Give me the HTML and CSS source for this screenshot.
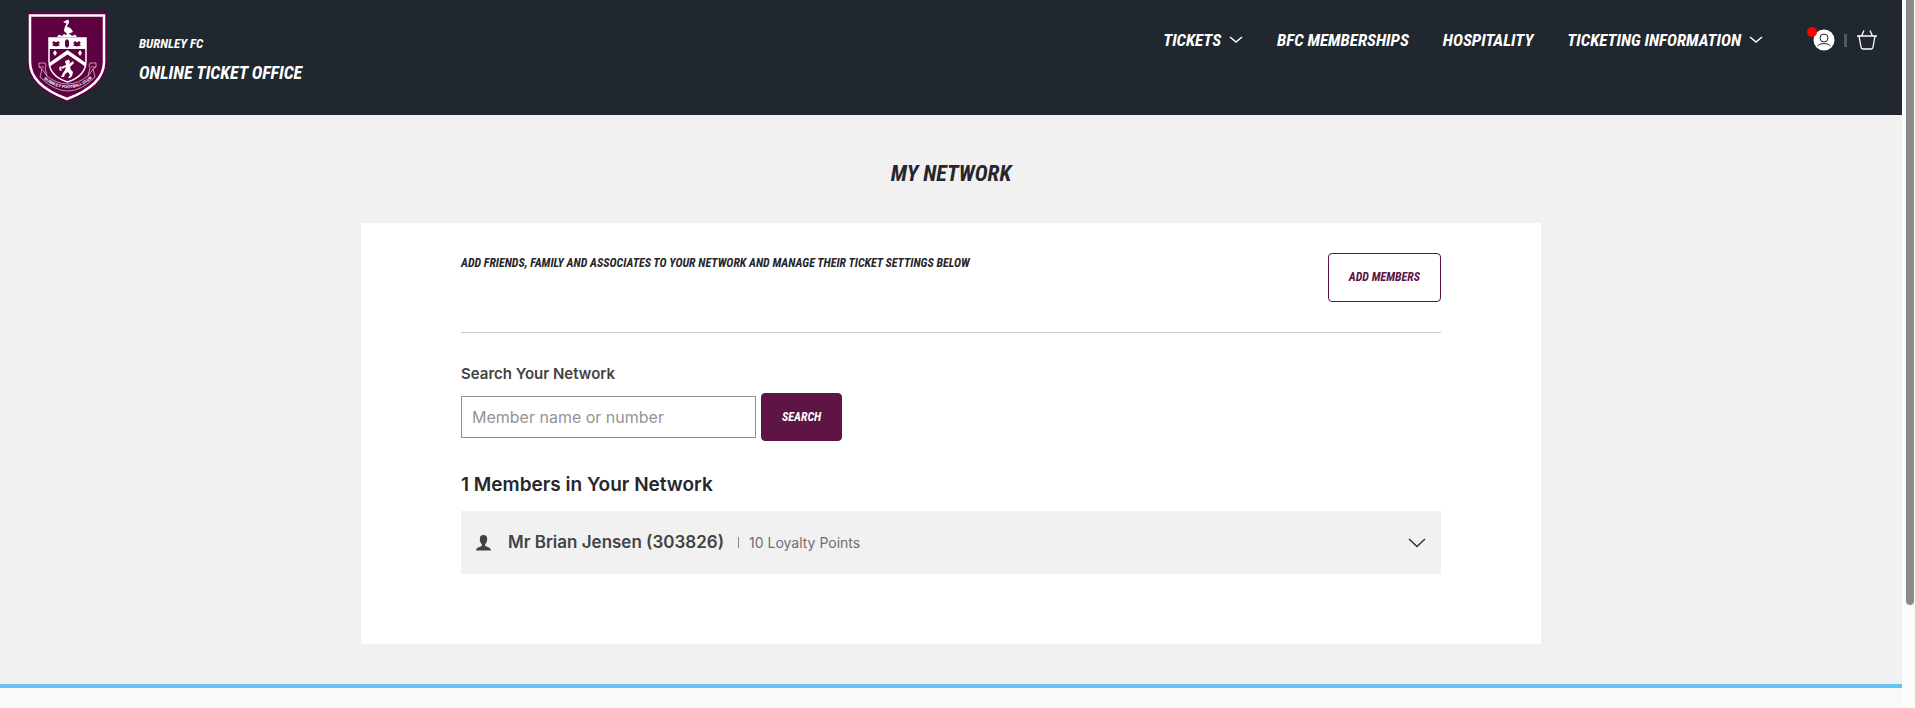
FILE: index.html
```html
<!DOCTYPE html>
<html lang="en">
<head>
    <meta charset="UTF-8">
    <meta name="viewport" content="width=device-width, initial-scale=1.0">
    <title>My Network - Burnley FC</title>
    <link rel="stylesheet" href="styles.css">
</head>
<body>
    <div class="page">
        <header class="header">
            <a href="#" class="brand">
                <svg class="crest" viewBox="0 0 80 90" role="img" aria-label="Burnley FC crest">
                    <path d="M0 0H80V50C80 70 62 82 40 90C18 82 0 70 0 50Z" fill="#5f0040"/>
                    <path d="M3 3.500H77V50C77 68 60 79.500 40 87C20 79.500 3 68 3 50Z" fill="none" stroke="#fff" stroke-width="2.500"/>
                    <!-- stork -->
                    <path d="M36 10L39 8.500Q41 7 42 9Q42.500 11 40.500 13L40 15Q44 15 46 20L42 21.500L41.500 24H39.500V21Q36 20 37.500 16L39.500 11.500Z" fill="#fff"/>
                    <path d="M30 25L32 22.500L35 24L37 22L40 23.500L43 22L45 24L48 22.500L50 25Z" fill="#fff"/>
                    <!-- shield -->
                    <path d="M22 26H59V49Q59 64 40.500 70Q22 64 22 49Z" fill="#5f0040" stroke="#fff" stroke-width="1.500"/>
                    <path d="M22 26H59V37H22Z" fill="#fff"/>
                    <path d="M25 31L27 29L29 30.500L31 29L33 31L31.500 32L33 33.500L29 34.500L25 33.500L26.500 32Z M46 31L48 29L50 30.500L52 29L54 31L52.500 32L54 33.500L50 34.500L46 33.500L47.500 32Z M40 27L42 29V34L40 36L38 34V29Z" fill="#5f0040"/>
                    <path d="M22 51L40.500 38L59 51V55L40.500 42.500L22 55Z" fill="#fff"/>
                    <path d="M28 38L30 41L28 44L26 41Z M53 38L55 41L53 44L51 41Z" fill="#fff"/>
                    <!-- lion -->
                    <path d="M38 49L42 47.500L43 50L42 52L46 49L47 51L43 55L44 58L46 60L45 64L43 66H41L43 63L41 60L38 62L37 65H34L36 61L38 58L39 55L35 57L34 55L39 53ZM34 59Q31 58 33 54L34 55Q33 57 35 58Z" fill="#fff"/>
                    <!-- scroll -->
                    <path d="M12 51H18Q20 53 18 56L20 64Q40 80 61 64L63 56Q61 53 63 51H69V55L66 57L68 65Q41 93 13 65L15 57L12 55ZM12 55H17M64 55H69M15 57L20 64M66 57L61 64" fill="#5f0040" stroke="#d6bfcd" stroke-width="0.800"/>
                    <path id="motto" d="M14 65Q41 88 68 64" fill="none"/>
                    <text class="crest-text"><textPath href="#motto" startOffset="50%" text-anchor="middle">BURNLEY FOOTBALL CLUB</textPath></text>
                </svg>
                <span class="brand-text">
                    <span class="brand-club">Burnley FC</span>
                    <span class="brand-title">Online Ticket Office</span>
                </span>
            </a>
            <nav class="nav">
                <a href="#" class="nav-link">Tickets
                    <svg class="nav-arrow" viewBox="0 0 14 8"><path d="M1 1L7 6L13 1"/></svg>
                </a>
                <a href="#" class="nav-link">BFC Memberships</a>
                <a href="#" class="nav-link">Hospitality</a>
                <a href="#" class="nav-link">Ticketing Information
                    <svg class="nav-arrow" viewBox="0 0 14 8"><path d="M1 1L7 6L13 1"/></svg>
                </a>
                <div class="tools">
                    <a href="#" class="account" aria-label="My account">
                        <svg width="22" height="22" viewBox="0 0 22 22"><circle cx="11" cy="11" r="10.500" fill="#fff"/><g fill="none" stroke="#20272e" stroke-width="1"><circle cx="11" cy="9" r="4"/><path d="M4.500 17Q6 14.500 11 14.500T17.500 17"/></g></svg>
                        <span class="account-dot"></span>
                    </a>
                    <span class="tools-divider"></span>
                    <a href="#" class="basket" aria-label="Basket">
                        <svg width="22" height="22" viewBox="0 0 22 22" fill="none" stroke="#fff" stroke-width="1.300" stroke-linejoin="round"><path d="M1 7H21M3 7L5 18Q5.200 20 7 20H15Q16.800 20 17 18L19 7M8 1.500L5.500 7M14 1.500L16.500 7"/></svg>
                    </a>
                </div>
            </nav>
        </header>

        <main class="main">
            <h1 class="page-title">My Network</h1>
            <section class="card">
                <div class="intro">
                    <h2 class="intro-text">Add friends, family and associates to your network and manage their ticket settings below</h2>
                    <button type="button" class="button button--outline">Add Members</button>
                </div>
                <form class="search">
                    <label for="member-search" class="search-label">Search Your Network</label>
                    <div class="search-row">
                        <input type="text" id="member-search" class="search-input" placeholder="Member name or number">
                        <button type="submit" class="button">Search</button>
                    </div>
                </form>
                <h2 class="members-title">1 Members in Your Network</h2>
                <button type="button" class="member" aria-expanded="false">
                    <svg class="member-icon" viewBox="0 0 15 16"><path d="M7.500 0C10 0 11.200 1.600 11.200 4C11.200 6.500 10 8.500 9.200 9.200V11C11 12 15 12.500 15 15.500H0C0 12.500 4 12 5.800 11V9.200C5 8.500 3.800 6.500 3.800 4C3.800 1.600 5 0 7.500 0Z"/></svg>
                    <span class="member-name">Mr Brian Jensen (303826)</span>
                    <span class="member-points">10 Loyalty Points</span>
                    <svg class="member-arrow" viewBox="0 0 18 10"><path d="M1 1L9 8.500L17 1"/></svg>
                </button>
            </section>
        </main>
        <footer class="footer"></footer>
    </div>
    <div class="scroll-track"><div class="scroll-thumb"></div></div>
</body>
</html>
```

FILE: styles.css
```css
:root {
    --claret: #5e1444;
    --header-bg: #20272e;
    --text-primary: #26262b;
    --text-secondary: #434343;
    --grey-bg: #f1f1f1;
    --font-display: "Roboto Condensed", "Liberation Sans Narrow", sans-serif;
    --font-body: Inter, sans-serif;
}

*, *::before, *::after {
    box-sizing: border-box;
    margin: 0;
    padding: 0;
}

body {
    display: grid;
    grid-template-columns: 1fr 13px;
    height: 100vh;
    overflow: hidden;
    font-family: var(--font-body);
    color: var(--text-primary);
    background: #fcfcfc;
}

a {
    color: inherit;
    text-decoration: none;
}

.page {
    display: flex;
    flex-direction: column;
    min-width: 0;
    background: #f9f9f9;
}

.header {
    display: flex;
    justify-content: space-between;
    align-items: flex-start;
    padding: 12px 24px 13px 27px;
    background: var(--header-bg);
    color: #fff;
    font-family: var(--font-display);
    font-weight: 700;
    font-style: italic;
    text-transform: uppercase;
    white-space: nowrap;
}

.brand {
    display: flex;
    gap: 32px;
}

.crest {
    width: 80px;
    height: 90px;
}

.crest-text {
    font: 700 4px var(--font-body);
    fill: #fff;
}

.brand-text {
    display: flex;
    flex-direction: column;
    gap: 5px;
    padding-top: 22px;
}

.brand-club {
    font-size: 13px;
    line-height: 20px;
}

.brand-title {
    font-size: 18px;
    line-height: 28px;
}

.nav {
    display: flex;
    align-items: center;
    gap: 34px;
    padding-top: 16px;
    font-size: 17px;
    line-height: 24px;
}

.nav-link {
    display: flex;
    align-items: center;
    gap: 8px;
}

.nav-arrow {
    width: 14px;
    height: 8px;
    fill: none;
    stroke: #fff;
    stroke-width: 1.5;
}

.tools {
    display: flex;
    align-items: center;
    gap: 9px;
    margin-left: 16px;
}

.tools svg {
    display: block;
}

.account {
    position: relative;
}

.account-dot {
    position: absolute;
    top: -2px;
    left: -6px;
    width: 10px;
    height: 10px;
    border-radius: 50%;
    background: #f00;
}

.tools-divider {
    width: 3px;
    height: 13px;
    background: #50565c;
}

.main {
    padding: 40px 20px;
    background: var(--grey-bg);
    border-bottom: 4px solid #67c4f2;
}

.page-title {
    margin-bottom: 30px;
    font: italic 700 22px/38px var(--font-display);
    text-align: center;
    text-transform: uppercase;
}

.card {
    max-width: 1180px;
    margin: 0 auto;
    padding: 30px 100px 70px;
    background: #fff;
}

.intro {
    display: flex;
    justify-content: space-between;
    align-items: flex-start;
    padding-bottom: 30px;
    border-bottom: 1px solid #ccc;
}

.intro-text {
    font: italic 700 12px/20px var(--font-display);
    text-transform: uppercase;
}

.button {
    padding: 14px 20px;
    border: 1px solid var(--claret);
    border-radius: 4px;
    background: var(--claret);
    color: #fff;
    font: italic 700 12px/18px var(--font-display);
    text-transform: uppercase;
    cursor: pointer;
}

.button--outline {
    background: #fff;
    color: var(--claret);
    line-height: 19px;
}

.search {
    padding: 30px 0;
}

.search-label {
    display: block;
    margin-bottom: 8px;
    color: var(--text-secondary);
    font-size: 15px;
    font-weight: 600;
    line-height: 22px;
}

.search-row {
    display: flex;
    align-items: center;
    gap: 5px;
}

.search-input {
    width: 295px;
    height: 42px;
    padding: 0 10px;
    border: 1px solid #919191;
    font: 16px var(--font-body);
}

.search-input::placeholder {
    color: #949494;
}

.members-title {
    margin-bottom: 12px;
    font-size: 19px;
    font-weight: 600;
    line-height: 28px;
}

.member {
    display: flex;
    align-items: center;
    width: 100%;
    padding: 20px 15px;
    border: 0;
    background: var(--grey-bg);
    color: var(--text-secondary);
    font-family: var(--font-body);
    line-height: 23px;
    cursor: pointer;
}

.member-icon {
    width: 15px;
    height: 16px;
    margin-right: 17px;
    fill: currentColor;
}

.member-name {
    margin-right: 14px;
    font-size: 17px;
    font-weight: 600;
}

.member-points {
    display: flex;
    align-items: center;
    gap: 10px;
    color: #707070;
    font-size: 14px;
}

.member-points::before {
    content: "";
    width: 1px;
    height: 11px;
    background: #8a8a8a;
}

.member-arrow {
    width: 18px;
    height: 10px;
    margin-left: auto;
    fill: none;
    stroke: #333;
    stroke-width: 1.5;
}

.scroll-track {
    display: flex;
    padding: 0 1px 0 4px;
    background: #fcfcfc;
}

.scroll-thumb {
    width: 8px;
    height: 85.5%;
    border-radius: 0 0 4px 4px;
    background: #8b8b8b;
}
```
